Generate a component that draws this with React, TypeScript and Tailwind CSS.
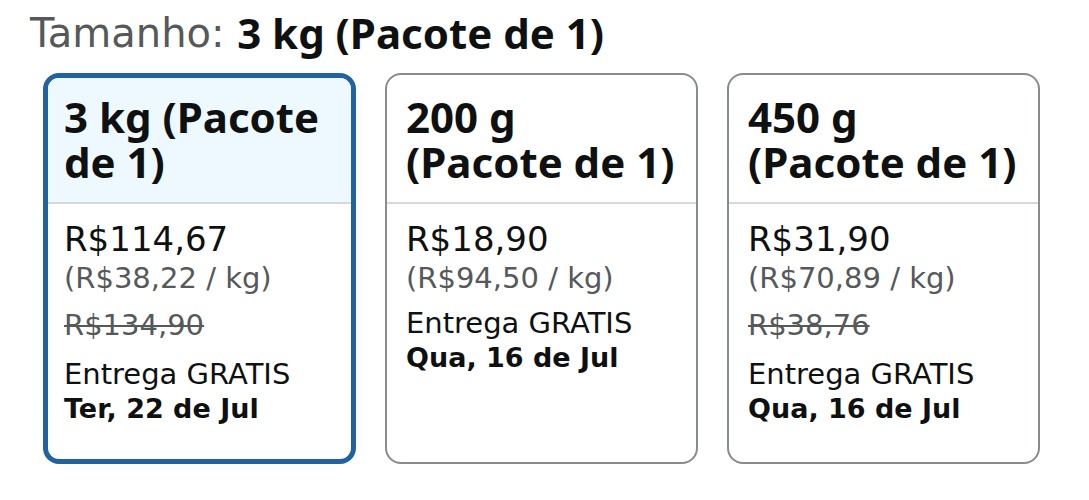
type SizeOption = {
  title: string;
  price: string;
  perUnit: string;
  listPrice?: string;
  delivery: string;
  selected?: boolean;
};

const options: SizeOption[] = [
  {
    title: "3 kg (Pacote de 1)",
    price: "R$114,67",
    perUnit: "(R$38,22 / kg)",
    listPrice: "R$134,90",
    delivery: "Ter, 22 de Jul",
    selected: true,
  },
  {
    title: "200 g (Pacote de 1)",
    price: "R$18,90",
    perUnit: "(R$94,50 / kg)",
    delivery: "Qua, 16 de Jul",
  },
  {
    title: "450 g (Pacote de 1)",
    price: "R$31,90",
    perUnit: "(R$70,89 / kg)",
    listPrice: "R$38,76",
    delivery: "Qua, 16 de Jul",
  },
];

const titleFont = { fontFamily: '"Noto Sans", Arial, sans-serif' };

function SizeCard({ option }: { option: SizeOption }) {
  return (
    <div
      className={
        option.selected
          ? "flex h-[391px] w-[313px] flex-col overflow-hidden rounded-[16px] border-[5px] border-[#2162a1]"
          : "flex h-[391px] w-[313px] flex-col overflow-hidden rounded-[16px] border-2 border-[#888c8c] bg-white"
      }
    >
      <div
        className={
          option.selected
            ? "h-[126px] shrink-0 border-b-2 border-[#d5d9d9] bg-[#edf8ff] px-[16px] pt-[16px]"
            : "h-[129px] shrink-0 border-b-2 border-[#d5d9d9] px-[19px] pt-[19px]"
        }
        style={titleFont}
      >
        <div className="text-[42px] leading-[45px] font-bold text-[#0f1111]">
          {option.title}
        </div>
      </div>
      <div
        className={
          option.selected
            ? "flex flex-col px-[16px] pt-[14px]"
            : "flex flex-col px-[19px] pt-[14px]"
        }
      >
        <div className="text-[34px] leading-[42px] text-[#0f1111]">
          {option.price}
        </div>
        <div className="text-[29px] leading-[36px] text-[#565959]">
          {option.perUnit}
        </div>
        {option.listPrice ? (
          <div className="mt-[9px] text-[29px] leading-[40px] text-[#565959] line-through">
            {option.listPrice}
          </div>
        ) : null}
        <div
          className={
            option.listPrice
              ? "mt-[11px] text-[29px] leading-[36px] text-[#0f1111]"
              : "mt-[9px] text-[29px] leading-[36px] text-[#0f1111]"
          }
        >
          Entrega GRATIS
        </div>
        <div className="text-[27px] leading-[34px] font-bold text-[#0f1111]">
          {option.delivery}
        </div>
      </div>
    </div>
  );
}

export default function App() {
  return (
    <div
      className="min-h-[500px] bg-white px-[30px] pt-[8px]"
      style={{ fontFamily: '"DejaVu Sans", Verdana, sans-serif' }}
    >
      <div className="flex h-[50px] items-center whitespace-nowrap">
        <span className="text-[40px] leading-[50px] text-[#565959]">
          Tamanho:&nbsp;
        </span>
        <span
          className="text-[42px] leading-[50px] font-bold text-[#0f1111]"
          style={titleFont}
        >
          3 kg (Pacote de 1)
        </span>
      </div>
      <div className="mt-[15px] flex gap-[29px] pl-[13px]">
        {options.map((o) => (
          <SizeCard key={o.price} option={o} />
        ))}
      </div>
    </div>
  );
}
